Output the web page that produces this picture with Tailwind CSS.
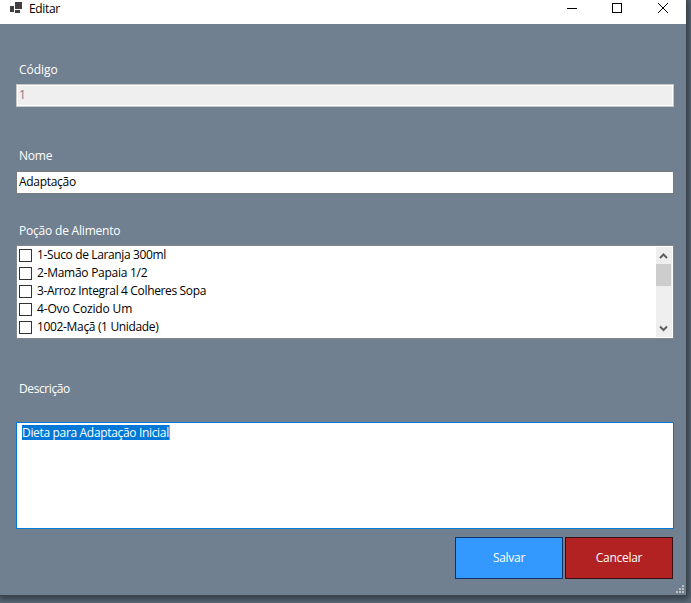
<!DOCTYPE html>
<html lang="pt-BR">
<head>
<meta charset="utf-8">
<title>Editar</title>
<script src="https://cdn.jsdelivr.net/npm/@tailwindcss/browser@4"></script>
</head>
<body class="h-[603px] w-[691px] overflow-hidden bg-[#5d6b79] font-['Open_Sans','Noto_Sans',sans-serif] text-[12px] leading-[16px] tracking-[-0.2px] text-black">
<main class="flex h-[596px] w-[687px] flex-col border-r border-b border-[#3b444c] bg-[#708090] shadow-[0_1px_7px_2px_#303a43]">
  <header class="flex h-6 shrink-0 items-start bg-white">
    <svg class="mt-[2px] ml-[10px] h-3 w-3 shrink-0" viewBox="0 0 12 12" shape-rendering="crispEdges" fill="#404040"><path d="M5 0h7v7H5zM0 4h4v6H0zM5 8h5v3H5z"/></svg>
    <h1 class="mt-px ml-[7px] flex-1 tracking-[-0.35px]">Editar</h1>
    <div class="flex text-black">
      <svg class="h-[18px] w-[46px]" viewBox="0 0 46 18" shape-rendering="crispEdges"><path d="M18 8.5h10" stroke="currentColor"/></svg>
      <svg class="h-[18px] w-[46px]" viewBox="0 0 46 18" shape-rendering="crispEdges"><path d="M17.500 3.500h9v9h-9z" fill="none" stroke="currentColor"/></svg>
      <svg class="h-[18px] w-[45px]" viewBox="0 0 45 18"><path d="M17 3l10 10M27 3L17 13" stroke="currentColor" stroke-width="1"/></svg>
    </div>
  </header>
  <form class="flex flex-col pt-[38px] pl-4">
    <label class="ml-[3px] h-[22px] tracking-[-0.05px] text-white">Código</label>
    <div class="h-[23px] w-[658px] border border-[#c8c8c8] bg-white p-px"><div class="h-[19px] bg-[#efefef] pl-px text-[#8a7283]"><span class="relative top-px">1</span></div></div>
    <label class="mt-[41px] ml-[3px] h-[23px] text-white">Nome</label>
    <div class="h-[23px] w-[658px] border border-[#7a7a7a] bg-white pt-[2px] pl-[2px] tracking-[-0.3px]">Adaptação</div>
    <label class="mt-[29px] ml-[3px] h-[22px] text-white">Poção de Alimento</label>
    <div class="flex h-[94px] w-[658px] justify-between border border-[#828790] bg-white p-px">
      <ul class="pl-px">
        <li class="flex h-[18px] tracking-[-0.37px]"><i class="mt-[2px] mr-[5px] h-[13px] w-[13px] border border-[#333]"></i>1-Suco de Laranja 300ml</li>
        <li class="flex h-[18px] tracking-[-0.27px]"><i class="mt-[2px] mr-[5px] h-[13px] w-[13px] border border-[#333]"></i>2-Mamão Papaia 1/2</li>
        <li class="flex h-[18px] tracking-[-0.35px]"><i class="mt-[2px] mr-[5px] h-[13px] w-[13px] border border-[#333]"></i>3-Arroz Integral 4 Colheres Sopa</li>
        <li class="flex h-[18px] tracking-[-0.15px]"><i class="mt-[2px] mr-[5px] h-[13px] w-[13px] border border-[#333]"></i>4-Ovo Cozido Um</li>
        <li class="flex h-[18px] tracking-[-0.34px]"><i class="mt-[2px] mr-[5px] h-[13px] w-[13px] border border-[#333]"></i>1002-Maçã (1 Unidade)</li>
      </ul>
      <div class="flex h-[90px] w-4 flex-col justify-between bg-[#efefef]">
        <div>
          <svg class="h-[17px] w-4" viewBox="0 0 16 17" fill="none" stroke="#606060" stroke-width="2"><path d="M4 11L7.500 7.500L11 11"/></svg>
          <div class="h-[22px] w-[15px] bg-[#cdcdcd]"></div>
        </div>
        <svg class="h-[17px] w-4" viewBox="0 0 16 17" fill="none" stroke="#606060" stroke-width="2"><path d="M4 6.500L7.500 10L11 6.500"/></svg>
      </div>
    </div>
    <label class="mt-[42px] ml-[3px] h-[41px] tracking-[-0.4px] text-white">Descrição</label>
    <div class="h-[107px] w-[658px] border border-[#0078d7] bg-white pt-[2px] pl-[5px]"><span class="block h-[15px] w-[148px] border-r border-[#ff8728] bg-[#0078d7] tracking-[-0.33px] whitespace-nowrap text-white"><span class="block leading-[15px]">Dieta para Adaptação Inicial</span></span></div>
    <div class="mt-2 flex w-[657px] justify-end gap-[2px] text-white">
      <button type="button" class="h-[42px] w-[108px] border border-[#103463] bg-[#3399ff] tracking-[-0.3px]">Salvar</button>
      <button type="button" class="h-[42px] w-[108px] border border-[#351013] bg-[#b22222] tracking-[-0.3px]">Cancelar</button>
    </div>
  </form>
  <svg class="mt-auto mr-[2px] mb-[2px] h-[8px] w-[8px] self-end" viewBox="0 0 8 8" shape-rendering="crispEdges" fill="#bfc1c1"><path d="M6 0h2v2H6zM3 3h2v2H3zM6 3h2v2H6zM0 6h2v2H0zM3 6h2v2H3zM6 6h2v2H6z"/></svg>
</main>
</body>
</html>
